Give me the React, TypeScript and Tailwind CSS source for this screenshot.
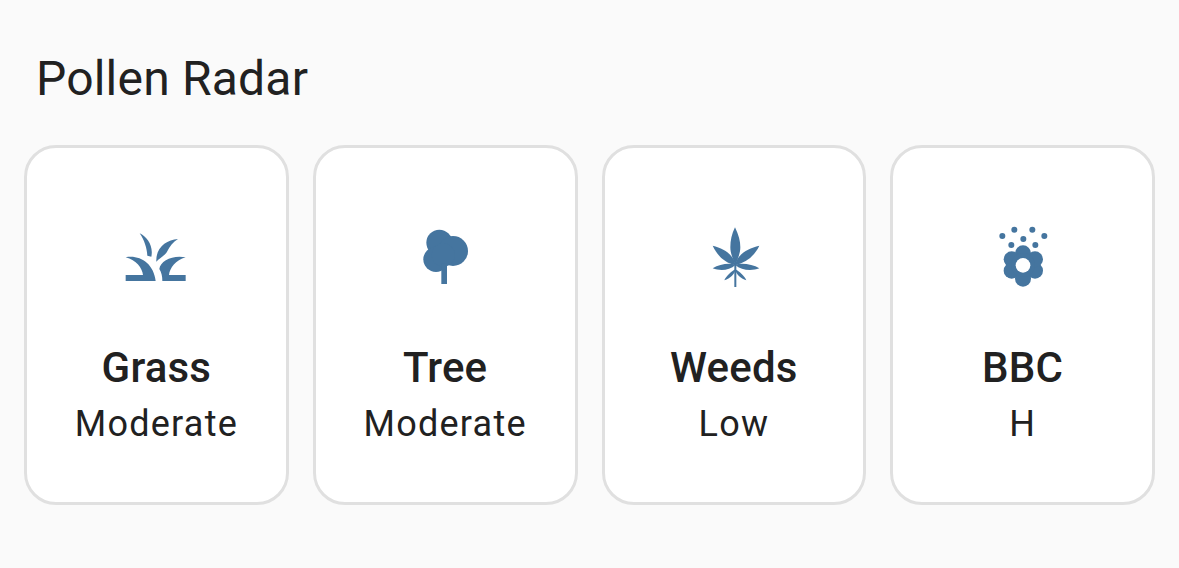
const ICON = "#45759f";

function GrassIcon() {
  return (
    <svg viewBox="4 0 270 210" className="h-[70px] w-[90px]" fill={ICON}>
      <path d="M48 165H100C98 145 80 120 48 112C90 104 132 130 138 183H48Z" />
      <path d="M228 165H178C180 145 198 120 228 112C190 104 152 122 149 147C156 158 158 170 158 183H228Z" />
      <path d="M90 40C112 50 132 78 125 110L113 107C112 85 104 60 90 40Z" />
      <path d="M205 57C170 60 138 82 140 125C148 115 165 108 172 95C180 80 190 66 205 57Z" />
    </svg>
  );
}

function TreeIcon() {
  return (
    <svg viewBox="0 0 270 210" className="h-[70px] w-[90px]" fill={ICON}>
      <circle cx="118" cy="68" r="39" />
      <circle cx="159" cy="93" r="45" />
      <circle cx="108" cy="118" r="38" />
      <circle cx="130" cy="105" r="35" />
      <rect x="124" y="130" width="17" height="62" />
    </svg>
  );
}

function WeedIcon() {
  return (
    <svg viewBox="-6 0 270 210" className="h-[70px] w-[90px]" fill={ICON}>
      <path d="M132 22C143 45 148 62 148 82C148 100 141 114 133 135C125 114 118 100 118 82C118 62 122 42 132 22Z" />
      <path d="M65 77C100 86 128 104 134 136C100 128 80 108 65 77Z" />
      <path d="M205 77C168 86 138 104 132 136C166 128 190 108 205 77Z" />
      <path d="M65 145C85 133 112 128 134 134C114 152 88 153 65 145Z" />
      <path d="M205 145C185 133 154 128 132 134C152 152 182 153 205 145Z" />
      <path d="M100 181C106 168 120 154 134 148C130 164 118 175 100 181Z" />
      <path d="M166 181C160 168 146 154 132 148C136 164 148 175 166 181Z" />
      <rect x="130" y="130" width="6" height="71" />
    </svg>
  );
}

function BbcIcon() {
  const dots = [[66, 48], [102, 29], [156, 29], [192, 48], [129, 57], [93, 75], [165, 75]];
  const petals = [[128, 100], [94, 118], [94, 152], [128, 176], [164, 152], [164, 118]];
  return (
    <svg viewBox="-7 0 270 210" className="h-[70px] w-[90px]" fill={ICON}>
      {dots.map(([x, y]) => (
        <circle key={`${x}-${y}`} cx={x} cy={y} r="9" />
      ))}
      {petals.map(([x, y]) => (
        <circle key={`${x}-${y}`} cx={x} cy={y} r="24" />
      ))}
      <circle cx="128" cy="135" r="36" />
      <circle cx="128" cy="136" r="22" fill="#ffffff" />
    </svg>
  );
}

const cards = [
  { name: "Grass", level: "Moderate", icon: <GrassIcon /> },
  { name: "Tree", level: "Moderate", icon: <TreeIcon /> },
  { name: "Weeds", level: "Low", icon: <WeedIcon /> },
  { name: "BBC", level: "H", icon: <BbcIcon /> },
];

export default function App() {
  return (
    <div className="h-[568px] w-[1179px] overflow-hidden bg-[#fafafa] px-6 pt-[49px] font-['Roboto',sans-serif] text-[#212121]">
      <h1 className="pl-3 text-[48px] leading-[60px] font-normal tracking-[0.2px]">Pollen Radar</h1>
      <div className="mt-9 grid grid-cols-4 gap-6">
        {cards.map((c) => (
          <div
            key={c.name}
            className="flex h-[360px] flex-col items-center rounded-[32px] border-[3px] border-[#e0e0e0] bg-white pt-[72px]"
          >
            {c.icon}
            <div className="mt-[50px] text-[42px] leading-[56px] font-medium tracking-[0.2px]">{c.name}</div>
            <div className="mt-[1px] text-[36px] leading-[54px] tracking-[1.25px]">{c.level}</div>
          </div>
        ))}
      </div>
    </div>
  );
}
